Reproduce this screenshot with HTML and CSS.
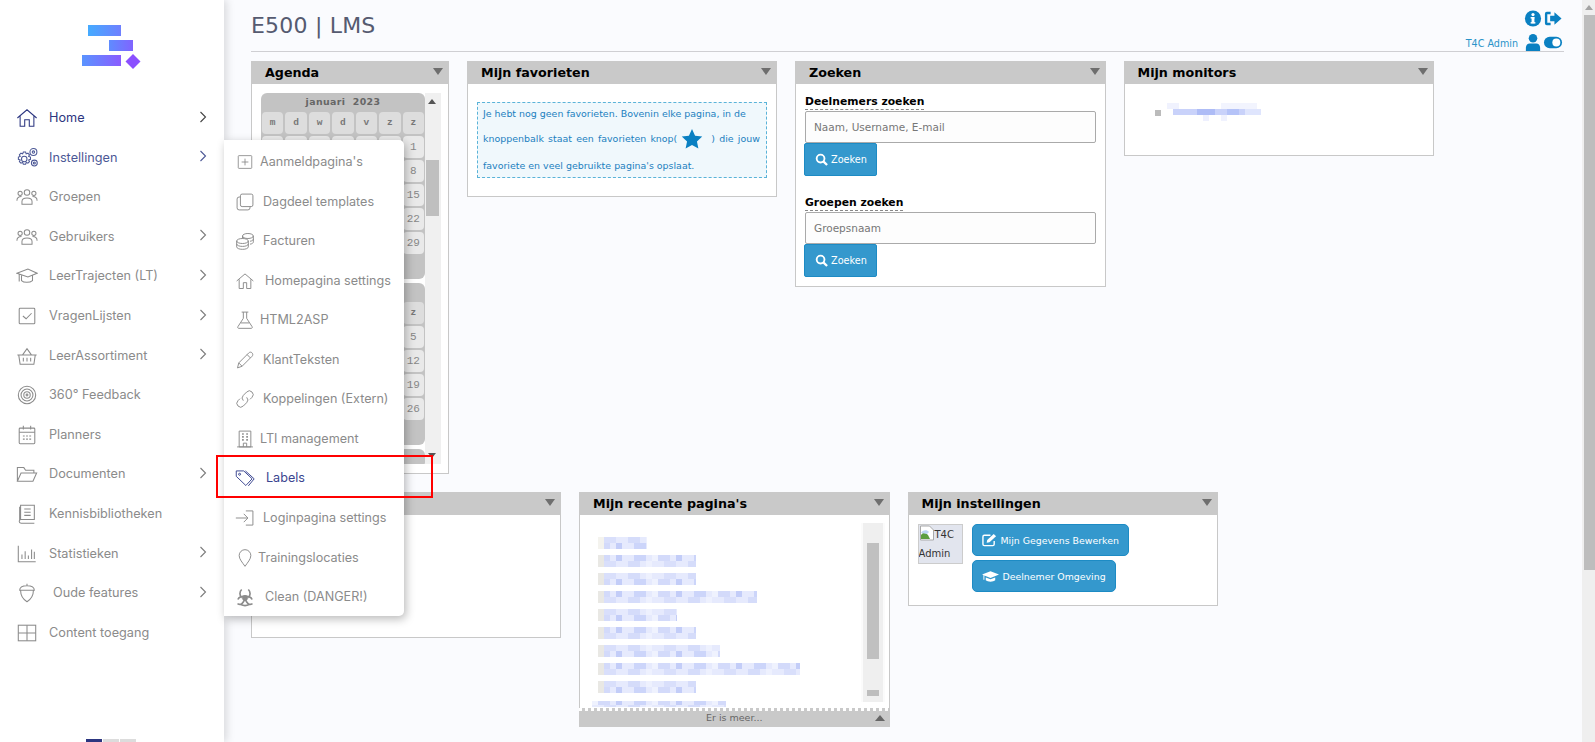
FILE: index.html
```html
<!DOCTYPE html>
<html lang="nl">
<head>
<meta charset="utf-8">
<title>E500 | LMS</title>
<link rel="stylesheet" href="styles.css">
</head>
<body>
<svg class="defs" width="0" height="0" aria-hidden="true">
  <defs>
    <linearGradient id="lg1" x1="0" y1="0" x2="1" y2="0"><stop offset="0" stop-color="#45abff"/><stop offset="1" stop-color="#6f80ff"/></linearGradient>
    <linearGradient id="lg2" x1="0" y1="0" x2="1" y2="0"><stop offset="0" stop-color="#5f8cff"/><stop offset="1" stop-color="#8064ff"/></linearGradient>
    <linearGradient id="lg3" x1="0" y1="0" x2="1" y2="0"><stop offset="0" stop-color="#5a94ff"/><stop offset="1" stop-color="#8a5cff"/></linearGradient>
    <pattern id="mosaic" width="60" height="12" patternUnits="userSpaceOnUse">
      <rect width="60" height="12" fill="#e6eafd"/>
      <rect x="6" width="12" height="6" fill="#d9dffb"/><rect x="30" width="12" height="6" fill="#d5dcfa"/><rect x="48" width="6" height="6" fill="#eef1fe"/>
      <rect x="0" y="6" width="12" height="6" fill="#d3dafa"/><rect x="18" y="6" width="6" height="6" fill="#c3cdf8"/><rect x="36" y="6" width="12" height="6" fill="#ccd5fa"/><rect x="54" y="6" width="6" height="6" fill="#eff2fe"/>
    </pattern>
    <symbol id="chev" viewBox="0 0 8 12"><path d="M1.500 1l5 5-5 5" fill="none" stroke="currentColor" stroke-width="1.100"/></symbol>
    <symbol id="group" viewBox="0 0 24 20"><g fill="none" stroke="currentColor" stroke-width="1.100"><circle cx="12" cy="5" r="3"/><circle cx="4.500" cy="6" r="2.300"/><circle cx="19.500" cy="6" r="2.300"/><path d="M6.500 18v-3c0-2.500 2-4 5.500-4s5.500 1.500 5.500 4v3z"/><path d="M1 14c0-3 1.500-4.500 5-4.500M23 14c0-3-1.500-4.500-5-4.500"/></g></symbol>
  </defs>
</svg>
<div class="app">
  <aside class="sidebar">
    <div class="logo">
      <svg width="62" height="50" viewBox="0 0 62 50">
        <rect x="6" y="0" width="33" height="11" fill="url(#lg1)"/>
        <rect x="27" y="15" width="24" height="11" fill="url(#lg2)"/>
        <rect x="0" y="30" width="39" height="11" fill="url(#lg3)"/>
        <path d="M51 29l7.500 7.500L51 44l-7.500-7.500z" fill="#8b50ff"/>
      </svg>
    </div>
    <nav class="nav">
      <a class="nav-item home"><svg class="ic" viewBox="0 0 24 24"><path d="M1.500 12L12 3l10.500 9M4.500 10v11h5v-7h5v7h5V10"/></svg><span>Home</span><svg class="chev"><use href="#chev"/></svg></a>
      <a class="nav-item active"><svg class="ic" viewBox="0 0 24 24"><circle cx="9" cy="13" r="3"/><path d="M8 5.500h2.500l.6 2 1.900-.7 1.700 1.700-.9 1.800 2 .7v2.400l-2 .7.900 1.800-1.700 1.700-1.900-.8-.6 2H8l-.7-2-1.900.8-1.700-1.700.9-1.800-2-.7v-2.400l2-.7-.9-1.800 1.700-1.700 1.900.7z"/><circle cx="19" cy="5.500" r="3.800"/><circle cx="19" cy="5.500" r="1.300"/><circle cx="20" cy="17.500" r="3.200"/><circle cx="20" cy="17.500" r="1.100"/></svg><span>Instellingen</span><svg class="chev"><use href="#chev"/></svg></a>
      <a class="nav-item"><svg class="ic"><use href="#group"/></svg><span>Groepen</span></a>
      <a class="nav-item"><svg class="ic"><use href="#group"/></svg><span>Gebruikers</span><svg class="chev"><use href="#chev"/></svg></a>
      <a class="nav-item"><svg class="ic" viewBox="0 0 24 24"><path d="M1 9l12-4.500L23 9l-10 4zM6 11.500V17c2.500 2.500 9 2.500 12 0v-5.500M3.500 10v8"/></svg><span>LeerTrajecten (LT)</span><svg class="chev"><use href="#chev"/></svg></a>
      <a class="nav-item"><svg class="ic" viewBox="0 0 24 24"><rect x="3.500" y="3.500" width="17" height="17" rx="1"/><path d="M7.500 12l3.500 3 6-6"/></svg><span>VragenLijsten</span><svg class="chev"><use href="#chev"/></svg></a>
      <a class="nav-item"><svg class="ic" viewBox="0 0 24 24"><path d="M1.500 11h21M3 11l1.500 10h15L21 11M7 11l5-7 5 7M8 14v4M12 14v4M16 14v4"/></svg><span>LeerAssortiment</span><svg class="chev"><use href="#chev"/></svg></a>
      <a class="nav-item"><svg class="ic" viewBox="0 0 24 24"><circle cx="12" cy="12" r="9.500"/><circle cx="12" cy="12" r="6.500"/><circle cx="12" cy="12" r="3.500"/><circle cx="12" cy="12" r="1"/></svg><span>360° Feedback</span></a>
      <a class="nav-item"><svg class="ic" viewBox="0 0 24 24"><rect x="3.500" y="4.500" width="17" height="17" rx="1"/><path d="M3.500 9h17M8 2v4M16 2v4M7.500 13h2M11 13h2M14.500 13h2M7.500 16.500h2M11 16.500h2M14.500 16.500h2"/></svg><span>Planners</span></a>
      <a class="nav-item"><svg class="ic" viewBox="0 0 24 24"><path d="M1.500 20V5h7l2 3h9v3M1.500 20l4-9h17l-4 9z"/></svg><span>Documenten</span><svg class="chev"><use href="#chev"/></svg></a>
      <a class="nav-item"><svg class="ic" viewBox="0 0 24 24"><path d="M5 18V2.500h15v15.500H5.500a2 2 0 0 0 0 4H20M4 4v15M9 6.500h7M9 10h7M9 13.500h7"/></svg><span>Kennisbibliotheken</span></a>
      <a class="nav-item"><svg class="ic" viewBox="0 0 24 24"><path d="M2.500 3v17.500h19M6.500 17.500v-5M10 17.500V9M13.500 17.500v-4M17 17.500V7M20 17.500v-8"/></svg><span>Statistieken</span><svg class="chev"><use href="#chev"/></svg></a>
      <a class="nav-item indent"><svg class="ic" viewBox="0 0 24 24"><path d="M4 9c0-3 3-5 8-5s8 2 8 5zM12 4V2M5 9c0 6 3 10 7 12.500C16 19 19 15 19 9"/></svg><span>Oude features</span><svg class="chev"><use href="#chev"/></svg></a>
      <a class="nav-item"><svg class="ic" viewBox="0 0 24 24"><rect x="2.500" y="3.500" width="19" height="17"/><path d="M12 3.500v17M2.500 12h19"/></svg><span>Content toegang</span></a>
    </nav>
    <div class="pager"><i class="on"></i><i></i><i></i></div>
  </aside>

  <main class="main">
    <header class="top">
      <h1 class="title">E500 | LMS</h1>
      <div class="user">
        <span class="user-name">T4C Admin</span>
        <div class="user-icons">
          <svg class="ui" viewBox="0 0 20 20"><circle cx="10" cy="10" r="8.500" fill="#0a80c2"/><rect x="8.500" y="8.500" width="3" height="6.500" fill="#fff"/><rect x="7.500" y="8.500" width="4" height="1.500" fill="#fff"/><rect x="7.500" y="13.800" width="5" height="1.500" fill="#fff"/><circle cx="10" cy="5.800" r="1.700" fill="#fff"/></svg>
          <svg class="ui" viewBox="0 0 20 20"><path d="M7.500 3H3.500A2 2 0 0 0 1.500 5v10a2 2 0 0 0 2 2h4v-2.500H4V5.500h3.500zM11.500 3.500L19 10l-7.500 6.500V13H7V7h4.500z" fill="#0a80c2"/></svg>
          <svg class="ui" viewBox="0 0 20 20"><circle cx="10" cy="5.500" r="4.500" fill="#0a80c2"/><path d="M2.500 19v-3.500c0-3 2-4.500 4-4.500h7c2 0 4 1.500 4 4.500V19z" fill="#0a80c2"/></svg>
          <svg class="ui" viewBox="0 0 20 20"><rect x="0.500" y="4" width="19" height="12" rx="6" fill="#0a80c2"/><circle cx="13.500" cy="10" r="4.200" fill="#fff"/></svg>
        </div>
      </div>
    </header>

    <div class="row row-one">
      <section class="widget agenda">
        <h2 class="w-head">Agenda<i class="tri"></i></h2>
        <div class="cal-wrap">
          <div class="cal-scroll">
            <div class="month">
              <div class="m-title">januari&nbsp; 2023</div>
              <div class="cal-grid">
                <b>m</b><b>d</b><b>w</b><b>d</b><b>v</b><b>z</b><b>z</b>
                <u></u><u></u><u></u><u></u><u></u><u></u><u>1</u>
                <u>2</u><u>3</u><u>4</u><u>5</u><u>6</u><u>7</u><u>8</u>
                <u>9</u><u>10</u><u>11</u><u>12</u><u>13</u><u>14</u><u>15</u>
                <u>16</u><u>17</u><u>18</u><u>19</u><u>20</u><u>21</u><u>22</u>
                <u>23</u><u>24</u><u>25</u><u>26</u><u>27</u><u>28</u><u>29</u>
              </div>
              <div class="m-end"></div>
            </div>
            <div class="month">
              <div class="m-title">februari&nbsp; 2023</div>
              <div class="cal-grid">
                <b>m</b><b>d</b><b>w</b><b>d</b><b>v</b><b>z</b><b>z</b>
                <u></u><u></u><u>1</u><u>2</u><u>3</u><u>4</u><u>5</u>
                <u>6</u><u>7</u><u>8</u><u>9</u><u>10</u><u>11</u><u>12</u>
                <u>13</u><u>14</u><u>15</u><u>16</u><u>17</u><u>18</u><u>19</u>
                <u>20</u><u>21</u><u>22</u><u>23</u><u>24</u><u>25</u><u>26</u>
              </div>
              <div class="m-end"></div>
            </div>
            <div class="month">
              <div class="m-title">maart&nbsp; 2023</div>
            </div>
          </div>
          <div class="cal-bar"><i class="arrow-up"></i><i class="cal-thumb"></i><i class="arrow-down"></i></div>
        </div>
      </section>

      <section class="widget wide fav">
        <h2 class="w-head">Mijn favorieten<i class="tri"></i></h2>
        <div class="fav-box">
          <p class="fav-a">Je hebt nog geen favorieten. Bovenin elke pagina, in de</p>
          <p class="fav-b">knoppenbalk staat een favorieten knop( <svg width="22" height="22" viewBox="0 0 20 20"><path d="M10 1l2.800 6 6.500.8-4.800 4.400 1.300 6.500L10 15.400l-5.800 3.300 1.300-6.500L.7 7.800 7.200 7z" fill="#0a80c2"/></svg> ) die jouw</p>
          <p class="fav-c">favoriete en veel gebruikte pagina's opslaat.</p>
        </div>
      </section>

      <section class="widget wide search">
        <h2 class="w-head">Zoeken<i class="tri"></i></h2>
        <div class="s-body">
          <label class="s-label"><span>Deelnemers zoeken</span></label>
          <div class="s-input">Naam, Username, E-mail</div>
          <a class="btn btn-square"><svg width="13" height="13" viewBox="0 0 14 14"><circle cx="6" cy="6" r="4.200" fill="none" stroke="#fff" stroke-width="2"/><path d="M9 9l4 4" stroke="#fff" stroke-width="2.400"/></svg>Zoeken</a>
          <label class="s-label second"><span>Groepen zoeken</span></label>
          <div class="s-input">Groepsnaam</div>
          <a class="btn btn-square"><svg width="13" height="13" viewBox="0 0 14 14"><circle cx="6" cy="6" r="4.200" fill="none" stroke="#fff" stroke-width="2"/><path d="M9 9l4 4" stroke="#fff" stroke-width="2.400"/></svg>Zoeken</a>
        </div>
      </section>

      <section class="widget wide monitors">
        <h2 class="w-head">Mijn monitors<i class="tri"></i></h2>
        <div class="mon-body">
          <i class="bullet"></i>
          <svg width="94" height="20" viewBox="0 0 94 20"><rect x="0" y="0" width="12" height="6" fill="#f0f2fe"/><rect x="54" y="0" width="36" height="6" fill="#f2f4fe"/><rect x="6" y="6" width="88" height="6" fill="#c9d2fa"/><rect x="30" y="6" width="18" height="6" fill="#aebcf6"/><rect x="60" y="6" width="12" height="6" fill="#b5c3f8"/><rect x="78" y="6" width="16" height="6" fill="#dfe5fd"/><rect x="36" y="12" width="6" height="6" fill="#eef0fe"/><rect x="54" y="12" width="6" height="6" fill="#f0f2fe"/></svg>
        </div>
      </section>
    </div>

    <div class="row row-two">
      <section class="widget wide hidden-widget">
        <h2 class="w-head"><i class="tri"></i></h2>
      </section>

      <section class="widget wide recent">
        <h2 class="w-head">Mijn recente pagina's<i class="tri"></i></h2>
        <div class="rec-body">
          <svg class="rec-lines" width="262" height="171" viewBox="0 0 262 171">
            <g fill="url(#mosaic)">
              <rect x="6" y="0" width="43" height="12"/>
              <rect x="6" y="18" width="92" height="12"/>
              <rect x="6" y="36" width="92" height="12"/>
              <rect x="6" y="54" width="153" height="12"/>
              <rect x="6" y="72" width="73" height="12"/>
              <rect x="6" y="90" width="92" height="12"/>
              <rect x="6" y="108" width="116" height="12"/>
              <rect x="6" y="126" width="196" height="12"/>
              <rect x="6" y="144" width="92" height="12"/>
              <rect x="-6" y="164" width="134" height="6"/>
            </g>
            <g fill="#e9e8e4">
              <rect width="6" height="12" y="0" fill="#f4f3ee"/>
              <rect width="6" height="12" y="18"/>
              <rect width="6" height="12" y="36"/>
              <rect width="6" height="12" y="54"/>
              <rect width="6" height="12" y="72"/>
              <rect width="6" height="12" y="90"/>
              <rect width="6" height="12" y="108"/>
              <rect width="6" height="12" y="126"/>
              <rect width="6" height="12" y="144"/>
            </g>
          </svg>
          <div class="rec-bar"><i class="rec-cap"></i><i class="rec-thumb"></i><i class="rec-knob"></i></div>
        </div>
        <div class="rec-foot">Er is meer...<i class="tri-up"></i></div>
      </section>

      <section class="widget wide settings">
        <h2 class="w-head">Mijn instellingen<i class="tri"></i></h2>
        <div class="set-body">
          <div class="avatar"><svg class="broken" width="16" height="16" viewBox="0 0 16 16"><path d="M1.500 1h9l4 4v10h-13z" fill="#fff" stroke="#a9a9a9"/><path d="M2 14V10c3-4 5-2 7 0l2 4z" fill="#5c9e3f"/><path d="M2 8c1-3 6-4 8-1l-2 2z" fill="#bcd4f2"/></svg>T4C Admin</div>
          <div class="set-btns">
            <a class="btn btn-round"><svg width="15" height="14" viewBox="0 0 16 14"><path d="M13 8v3.500a1.500 1.500 0 0 1-1.500 1.500h-9A1.500 1.500 0 0 1 1 11.500v-8A1.500 1.500 0 0 1 2.500 2H9" fill="none" stroke="#fff" stroke-width="1.500"/><path d="M5.500 7L12.500.6 15 3l-7 6.500L5 10z" fill="#fff"/></svg>Mijn Gegevens Bewerken</a>
            <a class="btn btn-round"><svg width="17" height="13" viewBox="0 0 18 13"><path d="M9 1l9 3.500L9 8 2.500 5.500V10H1.500V5L0 4.500z" fill="#fff"/><path d="M4 7.500L9 9.500l5-2v3C12 12.500 6 12.500 4 10.500z" fill="#fff"/></svg>Deelnemer Omgeving</a>
          </div>
        </div>
      </section>
    </div>
  </main>

  <div class="page-bar"><i class="arrow-up"></i><i class="page-thumb"></i></div>

  <div class="popup">
    <a class="pop-item"><svg class="ic sm" viewBox="0 0 24 24"><rect x="3" y="3.500" width="18" height="17" rx="1"/><path d="M12 7.500v9M7.500 12h9"/></svg><span>Aanmeldpagina's</span></a>
    <a class="pop-item g2"><svg class="ic" viewBox="0 0 24 24"><rect x="6.500" y="2.500" width="15" height="15" rx="2"/><path d="M6.500 6H5a2.500 2.500 0 0 0-2.500 2.500V19A2.500 2.500 0 0 0 5 21.500h10.500A2.500 2.500 0 0 0 18 19v-1.500"/></svg><span>Dagdeel templates</span></a>
    <a class="pop-item g2"><svg class="ic" viewBox="0 0 24 24"><ellipse cx="15.500" cy="6" rx="6.500" ry="3"/><path d="M9 6v3M22 6v7c0 1.500-1.500 2.500-4 2.800M22 9.500c0 1.500-1.500 2.500-4 2.800"/><ellipse cx="9" cy="12" rx="7" ry="3"/><path d="M2 12v7c0 1.700 3 3 7 3s7-1.300 7-3v-7M2 15.500c0 1.700 3 3 7 3s7-1.300 7-3"/></svg><span>Facturen</span></a>
    <a class="pop-item g3"><svg class="ic" viewBox="0 0 24 24"><path d="M2 12L12 3.500 22 12M5 10v11h5v-7h4v7h5V10"/></svg><span>Homepagina settings</span></a>
    <a class="pop-item"><svg class="ic" viewBox="0 0 24 24"><path d="M8 2.500h8M10 2.500V10L3.500 20c-.7 1.200 0 2 1.200 2h14.600c1.200 0 1.900-.8 1.200-2L14 10V2.500M7 15.500h10"/></svg><span>HTML2ASP</span></a>
    <a class="pop-item g2"><svg class="ic" viewBox="0 0 24 24"><path d="M3 21.500l1.500-6L16.500 3.500c1.200-1.200 3-1.200 4 0s1.200 2.800 0 4L8.500 19.500zM4.500 15.500l4 4M14.500 5.500l4 4"/></svg><span>KlantTeksten</span></a>
    <a class="pop-item g2"><svg class="ic" viewBox="0 0 24 24"><path d="M10 14a4.500 4.500 0 0 1 0-6.400l4-4a4.500 4.500 0 0 1 6.400 6.400l-2.400 2.400"/><path d="M14 10a4.500 4.500 0 0 1 0 6.400l-4 4A4.500 4.500 0 0 1 3.600 14L6 11.600"/></svg><span>Koppelingen (Extern)</span></a>
    <a class="pop-item"><svg class="ic" viewBox="0 0 24 24"><path d="M5 2.500h14v19H5zM2.500 21.500h19M10 21.500V17h4v4.500"/><path d="M8.500 6h2M13.500 6h2M8.500 9.500h2M13.500 9.500h2M8.500 13h2M13.500 13h2" stroke-width="2"/></svg><span>LTI management</span></a>
    <a class="pop-item on g4"><svg class="ic" viewBox="0 0 24 24"><path d="M1.500 3.500h9l10 9.500-7.500 8-11.500-11z"/><circle cx="5.500" cy="7.500" r="1.200"/><path d="M12.500 3.500l10.500 9.500-7 8.500"/></svg><span>Labels</span></a>
    <a class="pop-item g2"><svg class="ic" viewBox="0 0 24 24"><path d="M1 12h14M10.500 7l5 5-5 5M13 3.500h8.500v17H13"/></svg><span>Loginpagina settings</span></a>
    <a class="pop-item g5"><svg class="ic" viewBox="0 0 24 24"><path d="M12 22c-3-4.500-7-8.500-7-13a7 7 0 0 1 14 0c0 4.500-4 8.500-7 13z"/></svg><span>Trainingslocaties</span></a>
    <a class="pop-item g3"><svg class="ic bio" viewBox="0 0 24 24"><circle cx="12" cy="13" r="2.500" fill="currentColor"/><path d="M8 3c-3 3-2.500 7.500 0 10M16 3c3 3 2.500 7.500 0 10M3.500 15c1-3 5-4.500 8.500-3.500 3.500-1 7.500.5 8.500 3.500M3 20c4 2.500 7 0 9-6.500 2 6.500 5 9 9 6.500M7 21c3 1.500 7 1.500 10 0"/></svg><span>Clean (DANGER!)</span></a>
  </div>
  <div class="highlight"></div>
</div>
</body>
</html>
```
FILE: styles.css
```css
* { box-sizing: border-box; }
html, body { margin: 0; height: 100%; overflow: hidden; }
body { background: #fafbfe; font-family: "DejaVu Sans", Verdana, sans-serif; color: #000; }
.defs { position: absolute; }
.app { position: relative; display: flex; width: 100%; height: 742px; overflow: hidden; }

/* sidebar */
.sidebar { position: relative; flex: 0 0 224px; background: #fff; box-shadow: 3px 0 8px rgba(0, 0, 0, .13); z-index: 2; display: flex; flex-direction: column; }
.logo { height: 98.300px; padding: 25px 0 0 82px; }
.logo svg { display: block; }
.nav { display: flex; flex-direction: column; }
.nav-item { display: flex; align-items: center; height: 39.600px; padding-left: 16px; font: 12.700px/20px Inter, "Noto Sans", sans-serif; color: #8b8b8b; }
.nav-item span { margin-left: 11px; }
.nav-item .chev { position: absolute; left: 199px; width: 8px; height: 12px; margin-top: -3px; color: #7c7c7c; }
.nav-item.home { color: #2c3680; }
.nav-item.home .chev { color: #444; }
.nav-item.active { color: #4c5896; }
.nav-item.active .chev { color: #4c5896; }
.nav-item.indent span { margin-left: 15px; }
.ic { flex: none; width: 22px; height: 22px; fill: none; stroke: currentColor; stroke-width: 1.150; }
.pager { position: absolute; left: 86px; top: 739px; display: flex; gap: 1px; }
.pager i { width: 16px; height: 6px; background: #dcdcdc; }
.pager i.on { background: #2c3680; }

/* main */
.main { flex: 1; min-width: 0; padding: 0 18px 0 27px; }
.top { height: 52px; display: flex; justify-content: space-between; align-items: flex-start; border-bottom: 1px solid #cfcfd3; }
.title { margin: 12px 0 0; font-size: 22px; line-height: 28px; font-weight: 400; color: #555a70; letter-spacing: .2px; }
.user { display: flex; align-items: flex-end; height: 51px; }
.user-name { font-size: 9.600px; line-height: 14px; color: #2a93c9; margin-right: 5px; }
.user-icons { display: grid; grid-template-columns: 20px 20px; gap: 5px 0; padding-top: 9px; width: 41px; height: 51px; }
.ui { width: 20px; height: 19px; display: block; }

.row { display: flex; align-items: flex-start; gap: 18px; }
.row-one { margin-top: 9px; }
.row-two { margin-top: 18px; }
.widget { position: relative; border: 1px solid #c8c8c8; background: #fff; width: 198px; }
.widget.wide { width: 310.500px; }
.widget.fav, .widget.hidden-widget { width: 310px; }
.w-head { position: relative; height: 23px; background: #c9c9c9; padding-left: 14px; margin: -1px -1px 0; font-size: 12.700px; line-height: 24px; font-weight: 700; color: #000; }
.tri { position: absolute; right: 6px; top: 7px; width: 0; height: 0; border: 5.500px solid transparent; border-top: 7px solid #6e6e6e; border-bottom: 0; }

/* agenda */
.agenda { height: 413px; }
.cal-wrap { display: flex; padding: 9px 9px 0; height: 380px; overflow: hidden; }
.cal-scroll { width: 164px; flex: none; }
.month { background: #c3c3c3; border-radius: 6px; margin-bottom: 4px; padding: 0 1px; }
.m-title { height: 19px; text-align: center; font-size: 9.400px; line-height: 17px; font-weight: 700; letter-spacing: .4px; color: #666; }
.cal-grid { display: grid; grid-template-columns: repeat(7, 21.400px); gap: 2px; justify-content: space-between; }
.cal-grid b, .cal-grid u { height: 22px; border-radius: 4px; text-decoration: none; text-align: center; background: #ddd; font: 700 9.500px/22px "Liberation Mono", monospace; color: #777; }
.cal-grid u { background: #e9e9e9; font: 400 11px/22px "Liberation Mono", monospace; color: #888; }
.m-end { height: 25px; }
.cal-bar { position: relative; flex: none; width: 16px; background: #f0f0f0; height: 371px; }
.arrow-up, .arrow-down { position: absolute; left: 3px; width: 0; height: 0; border: 4px solid transparent; }
.arrow-up { top: 6px; border-top: 0; border-bottom: 5px solid #555; }
.arrow-down { bottom: 6px; border-bottom: 0; border-top: 5px solid #555; }
.cal-thumb { position: absolute; left: 1px; top: 67px; width: 13px; height: 56px; background: #bfbfbf; }

/* favourites */
.fav { height: 136px; }
.fav-box { margin: 18px 9px 0 9px; height: 76px; padding: 0 5px; background: #f0f8fc; border: 1px dashed #5ab3d8; color: #1b80bf; font-size: 9.450px; }
.fav-box p { display: flex; align-items: center; margin: 0; white-space: nowrap; }
.fav-a { height: 21px; }
.fav-b { height: 29px; word-spacing: 1.200px; }
.fav-c { height: 25px; }
.fav-b svg { margin: 0 8px 0 4px; }

/* search */
.search { height: 226px; }
.s-body { padding: 11px 9px 0 9px; }
.s-label { display: block; height: 16px; font-size: 10.800px; font-weight: 700; line-height: 14px; }
.s-label span { border-bottom: 1px dashed #888; display: inline-block; height: 15px; }
.s-label.second { margin-top: 20px; }
.s-input { width: 291px; height: 32px; border: 1px solid #aaa; border-radius: 2px; background: #fdfdfd; color: #777; font-size: 10.500px; line-height: 30px; padding-left: 8px; }
.btn { display: inline-flex; align-items: center; color: #fff; background: #3498cd; border: 1px solid #1d8bc4; font-size: 9.700px; white-space: nowrap; }
.btn-square { height: 33px; width: 73px; margin-left: -1px; border-radius: 2px; padding-left: 10px; gap: 3px; }
.btn-round { height: 32px; border-radius: 5px; padding: 0 9px; gap: 4px; width: max-content; font-size: 9.400px; }

/* monitors */
.monitors { height: 95px; }
.mon-body { display: flex; align-items: flex-start; padding: 19px 0 0 30px; }
.bullet { width: 6px; height: 6px; background: #bbb; margin: 7px 6px 0 0; }

/* row two */
.hidden-widget { height: 146px; }
.recent { height: 234px; }
.rec-body { position: relative; height: 193px; overflow: hidden; padding: 22px 0 0 18px; }
.rec-lines { display: block; overflow: visible; }
.rec-bar { position: absolute; right: 4px; top: 8px; width: 24px; height: 179px; background: linear-gradient(90deg, #fbfbfb 0 2px, #efefef 2px 22px, #fbfbfb 22px); }
.rec-cap { position: absolute; left: 2px; top: 0; width: 17px; height: 7px; background: #efefef; }
.rec-thumb { position: absolute; left: 6px; top: 20px; width: 12px; height: 116px; background: #c0c0c0; }
.rec-knob { position: absolute; left: 6px; top: 167px; width: 12px; height: 6px; background: #bdbdbd; }
.rec-foot { position: relative; height: 19px; margin: 0 -1px -1px; padding-top: 3px; background: repeating-linear-gradient(90deg, #fff 0 3px, #c9c9c9 3px 6px) top / 100% 3px no-repeat, #c9c9c9; text-align: center; font-size: 9.500px; line-height: 14px; color: #666; }
.tri-up { position: absolute; right: 5px; top: 7px; width: 0; height: 0; border: 5px solid transparent; border-bottom: 6px solid #666; border-top: 0; }

.settings { height: 114px; }
.set-body { display: flex; padding: 9px 0 0 9px; }
.avatar { width: 45px; height: 40px; background: #e2e5ee; border: 1px solid #ccc; font-size: 10px; line-height: 19px; color: #333; overflow: hidden; }
.broken { vertical-align: -3px; }
.set-btns { display: flex; flex-direction: column; gap: 4px; margin-left: 9px; align-items: flex-start; }

/* page scrollbar */
.page-bar { position: relative; flex: 0 0 13px; background: #efefef; }
.page-bar .arrow-up { left: 3px; top: 5px; border-bottom-color: #a3a3a3; }
.page-thumb { position: absolute; left: 2px; right: 0; top: 15px; height: 555px; background: #bdbdbd; }

/* popup */
.popup { position: absolute; left: 224px; top: 140px; width: 180px; height: 476px; padding-top: 2.300px; background: #fff; border-radius: 0 5px 5px 0; box-shadow: 2px 3px 10px rgba(0, 0, 0, .28); z-index: 3; display: flex; flex-direction: column; }
.pop-item { display: flex; align-items: center; flex: none; height: 39.550px; padding-left: 11px; font: 12.600px/20px Inter, "Noto Sans", sans-serif; color: #8b8b8b; }
.pop-item .ic { width: 20px; height: 20px; }
.pop-item .ic.sm { width: 18px; height: 18px; margin: 0 1px; }
.pop-item .ic.bio { stroke-width: 2; }
.pop-item span { margin-left: 5px; }
.pop-item.g2 span { margin-left: 8px; }
.pop-item.g3 span { margin-left: 10px; }
.pop-item.g4 span { margin-left: 11px; }
.pop-item.g5 span { margin-left: 3px; }
.pop-item.on { color: #3a4590; }

.highlight { position: absolute; left: 216px; top: 455px; width: 217px; height: 43px; border: 2px solid #f00; z-index: 4; }
```
